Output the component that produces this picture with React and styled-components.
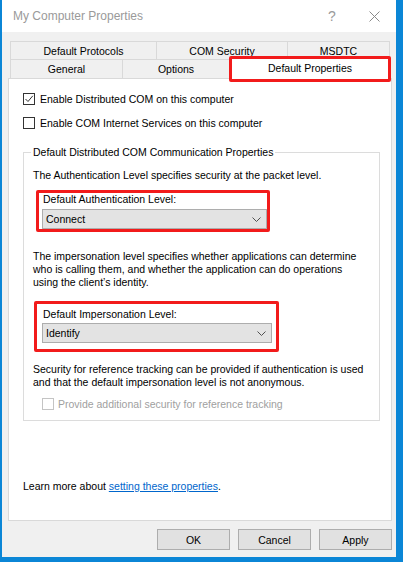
import styled, { createGlobalStyle } from "styled-components";

const GlobalStyle = createGlobalStyle`
  html, body {
    margin: 0;
    padding: 0;
    background: #0b86d6;
    height: 562px;
    overflow: hidden;
  }
  * { box-sizing: border-box; }
`;

export default function App() {
  return (
    <>
      <GlobalStyle />
      <Window>
        <TitleBar>
          <Title>My Computer Properties</Title>
          <Caption>
            <HelpButton>?</HelpButton>
            <CloseButton>
              <svg width="11" height="11" viewBox="0 0 11 11">
                <path d="M0.5 0.5 L10.5 10.5 M10.5 0.5 L0.5 10.5" stroke="#8a8a8a" strokeWidth="1" fill="none" />
              </svg>
            </CloseButton>
          </Caption>
        </TitleBar>

        <Tabs>
          <TabRow>
            {backTabs.map(({ label, width }) => (
              <Tab key={label} width={width}>{label}</Tab>
            ))}
          </TabRow>
          <TabRow $front>
            {frontTabs.map(({ label, width, active }) =>
              active ? (
                <ActiveTab key={label} width={width}>
                  {label}
                  <Marker />
                </ActiveTab>
              ) : (
                <Tab key={label} width={width}>{label}</Tab>
              )
            )}
          </TabRow>
        </Tabs>

        <Panel>
          <CheckRow $top={14}>
            <CheckBox>
              <svg width="10" height="10" viewBox="0 0 10 10">
                <path d="M1.5 5 L4 7.5 L8.8 1.8" stroke="#333" strokeWidth="1" fill="none" />
              </svg>
            </CheckBox>
            <span>Enable Distributed COM on this computer</span>
          </CheckRow>
          <CheckRow $top={12}>
            <CheckBox />
            <span>Enable COM Internet Services on this computer</span>
          </CheckRow>

          <Group>
            <Legend>Default Distributed COM Communication Properties</Legend>
            <Text $top={0}>The Authentication Level specifies security at the packet level.</Text>

            <Highlight $top={8} $left={3} width={234} $pad="0 0 0 3px">
              <FieldLabel>Default Authentication Level:</FieldLabel>
              <Select $top={3} width={225}>
                <span>Connect</span>
                <Chevron />
              </Select>
            </Highlight>

            <Text $top={18}>
              The impersonation level specifies whether applications can determine
              <br />
              who is calling them, and whether the application can do operations
              <br />
              using the client’s identity.
            </Text>

            <Highlight $top={12} $left={1} width={245} $pad="4px 0 6px 5px">
              <FieldLabel>Default Impersonation Level:</FieldLabel>
              <Select $top={2} width={230}>
                <span>Identify</span>
                <Chevron />
              </Select>
            </Highlight>

            <Text $top={11}>
              Security for reference tracking can be provided if authentication is used
              <br />
              and that the default impersonation level is not anonymous.
            </Text>

            <CheckRow $top={9} $left={9} $disabled>
              <CheckBox $disabled />
              <span>Provide additional security for reference tracking</span>
            </CheckRow>
          </Group>

          <LearnMore>
            Learn more about <Link href="#">setting these properties</Link>.
          </LearnMore>
        </Panel>

        <ButtonBar>
          <Button>OK</Button>
          <Button>Cancel</Button>
          <Button>Apply</Button>
        </ButtonBar>
      </Window>
    </>
  );
}

function Chevron() {
  return (
    <svg width="9" height="5" viewBox="0 0 9 5">
      <path d="M0.5 0.5 L4.5 4.5 L8.5 0.5" stroke="#505050" strokeWidth="1" fill="none" />
    </svg>
  );
}

const backTabs = [
  { label: "Default Protocols", width: 147 },
  { label: "COM Security", width: 132 },
  { label: "MSDTC", width: 103 },
];

const frontTabs = [
  { label: "General", width: 113 },
  { label: "Options", width: 108 },
  { label: "Default Properties", width: 162, active: true },
];

const font = `"Liberation Sans", Arial, sans-serif`;

const Window = styled.div`
  width: 394px;
  height: 557px;
  margin-left: 2px;
  background: #f0f0f0;
  display: flex;
  flex-direction: column;
  font-family: ${font};
  font-size: 10.5px;
  line-height: 13px;
  color: #000;
`;

const TitleBar = styled.div`
  height: 32px;
  flex: none;
  background: #fff;
  display: flex;
  align-items: center;
  padding-left: 11px;
`;

const Title = styled.div`
  font-size: 12px;
  color: #9a9a9a;
`;

const Caption = styled.div`
  margin-left: auto;
  display: flex;
  height: 100%;
`;

const HelpButton = styled.div`
  width: 44px;
  display: flex;
  align-items: center;
  justify-content: center;
  font-size: 14px;
  color: #9a9a9a;
  padding-left: 4px;
`;

const CloseButton = styled.div`
  width: 44px;
  display: flex;
  align-items: center;
  justify-content: center;
`;

const Tabs = styled.div`
  padding: 9px 0 0 8px;
  display: flex;
  flex-direction: column;
`;

const TabRow = styled.div`
  display: flex;
  align-items: flex-start;
  height: ${({ $front }) => ($front ? "19px" : "18px")};
`;

const Tab = styled.div`
  width: ${({ width }) => width}px;
  height: 100%;
  margin-right: -1px;
  border: 1px solid #d9d9d9;
  border-bottom: none;
  background: #f0f0f0;
  display: flex;
  align-items: center;
  justify-content: center;
  padding-top: 1px;
`;

const ActiveTab = styled.div`
  position: relative;
  z-index: 2;
  width: ${({ width }) => width}px;
  height: 22px;
  margin-top: -2px;
  border: 1px solid #d9d9d9;
  border-bottom: none;
  background: #fff;
  display: flex;
  align-items: center;
  justify-content: center;
  padding-bottom: 1px;
`;

const Marker = styled.div`
  position: absolute;
  left: -1px;
  right: -1px;
  top: -2px;
  bottom: -3px;
  border: 3px solid #f21b1b;
  border-radius: 2px;
  pointer-events: none;
`;

const Panel = styled.div`
  height: 443px;
  margin: 0 4px 0 6px;
  background: #fff;
  border: 1px solid #d9d9d9;
  padding-left: 14px;
  display: flex;
  flex-direction: column;
  align-items: flex-start;
`;

const CheckRow = styled.div`
  display: flex;
  align-items: center;
  gap: 5px;
  height: 12px;
  margin-top: ${({ $top }) => $top}px;
  margin-left: ${({ $left = 0 }) => $left}px;
  color: ${({ $disabled }) => ($disabled ? "#a0a0a0" : "#000")};
  white-space: nowrap;
`;

const CheckBox = styled.div`
  width: 12px;
  height: 12px;
  flex: none;
  border: 1px solid ${({ $disabled }) => ($disabled ? "#c4c4c4" : "#333")};
  background: #fff;
  display: flex;
  align-items: center;
  justify-content: center;
  margin-right: ${({ $disabled }) => ($disabled ? "-1px" : "0")};
`;

const Group = styled.fieldset`
  width: 357px;
  margin: 17px 0 0 0;
  padding: 10px 0 10px 9px;
  border: 1px solid #dcdcdc;
  min-width: 0;
  display: flex;
  flex-direction: column;
  align-items: flex-start;
`;

const Legend = styled.legend`
  padding: 0 2px;
  margin-left: -2px;
  line-height: 13px;
  white-space: nowrap;
`;

const Text = styled.p`
  margin: ${({ $top }) => $top}px 0 0 0;
  line-height: 13px;
  white-space: nowrap;
`;

const Highlight = styled.div`
  width: ${({ width }) => width}px;
  margin: ${({ $top }) => $top}px 0 0 ${({ $left }) => $left}px;
  border: 3px solid #f21b1b;
  border-radius: 2px;
  padding: ${({ $pad }) => $pad};
  display: flex;
  flex-direction: column;
  align-items: flex-start;
`;

const FieldLabel = styled.div`
  padding-left: 1px;
  line-height: 13px;
`;

const Select = styled.div`
  width: ${({ width }) => width}px;
  height: 20px;
  margin-top: ${({ $top }) => $top}px;
  background: #e3e3e3;
  border: 1px solid #adadad;
  display: flex;
  align-items: center;
  justify-content: space-between;
  padding: 0 5px 0 3px;
`;

const LearnMore = styled.div`
  margin-top: 59px;
  line-height: 13px;
`;

const Link = styled.a`
  color: #0066cc;
  text-decoration: underline;
`;

const ButtonBar = styled.div`
  display: flex;
  justify-content: flex-end;
  gap: 8px;
  margin-top: 8px;
  padding-right: 4px;
`;

const Button = styled.button`
  width: 73px;
  height: 21px;
  padding: 0;
  background: #e1e1e1;
  border: 1px solid #adadad;
  font-family: ${font};
  font-size: 10.5px;
  color: #000;
`;
